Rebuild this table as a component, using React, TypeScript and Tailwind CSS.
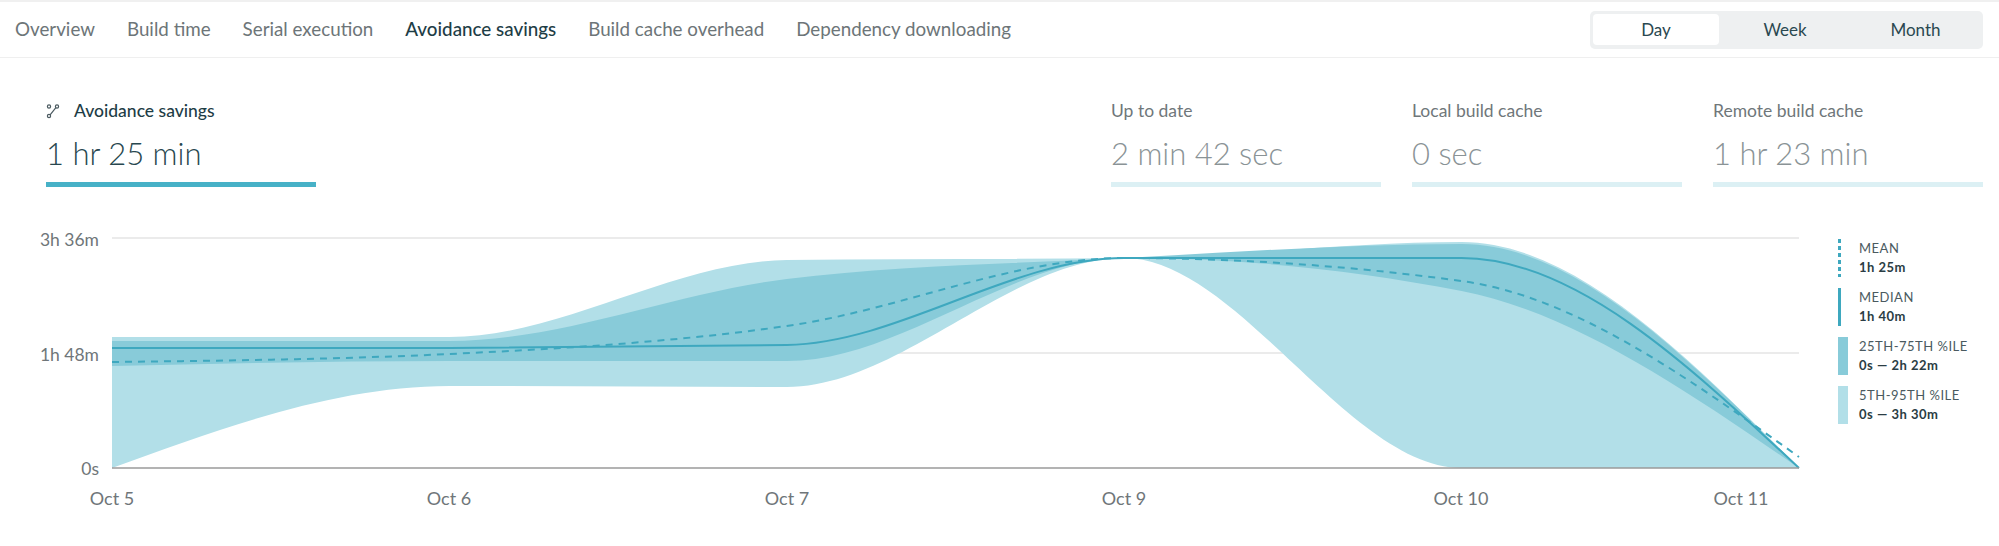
import React from "react";

const OFF = 200;
const XS = [112, 449.4, 786.8, 1124.2, 1461.6, 1799];
const P95 = [338, 338, 261, 259, 243, 469];
const P75 = [342, 342, 280, 259, 245, 469];
const MED = [349, 349, 346, 259, 259, 469];
const MEAN = [363, 355, 327, 259, 282, 458];
const P25 = [367, 362, 362, 259, 292, 469];
const P5 = [469, 387, 388, 259, 469, 469];

function tangents(xs: number[], ys: number[]): number[] {
  const n = xs.length;
  const s: number[] = [];
  for (let i = 0; i < n - 1; i++) s.push((ys[i + 1] - ys[i]) / (xs[i + 1] - xs[i]));
  const t: number[] = new Array(n).fill(0);
  for (let i = 1; i < n - 1; i++) {
    const h0 = xs[i] - xs[i - 1];
    const h1 = xs[i + 1] - xs[i];
    const s0 = s[i - 1];
    const s1 = s[i];
    const p = (s0 * h1 + s1 * h0) / (h0 + h1);
    t[i] = (Math.sign(s0) + Math.sign(s1)) * Math.min(Math.abs(s0), Math.abs(s1), 0.5 * Math.abs(p)) || 0;
  }
  t[0] = (3 * s[0] - t[1]) / 2;
  t[n - 1] = (3 * s[n - 2] - t[n - 2]) / 2;
  return t;
}

function fwd(xs: number[], ysPage: number[]): string {
  const ys = ysPage.map((y) => y - OFF);
  const t = tangents(xs, ys);
  let d = `M${xs[0]},${ys[0]}`;
  for (let i = 0; i < xs.length - 1; i++) {
    const dx = (xs[i + 1] - xs[i]) / 3;
    d += ` C${xs[i] + dx},${ys[i] + dx * t[i]} ${xs[i + 1] - dx},${ys[i + 1] - dx * t[i + 1]} ${xs[i + 1]},${ys[i + 1]}`;
  }
  return d;
}

function back(xs: number[], ysPage: number[]): string {
  const ys = ysPage.map((y) => y - OFF);
  const t = tangents(xs, ys);
  const n = xs.length;
  let d = ` L${xs[n - 1]},${ys[n - 1]}`;
  for (let i = n - 2; i >= 0; i--) {
    const dx = (xs[i + 1] - xs[i]) / 3;
    d += ` C${xs[i + 1] - dx},${ys[i + 1] - dx * t[i + 1]} ${xs[i] + dx},${ys[i] + dx * t[i]} ${xs[i]},${ys[i]}`;
  }
  return d;
}

function area(up: number[], lo: number[]): string {
  return fwd(XS, up) + back(XS, lo) + " Z";
}

const LINE = "#3ea8bf";
const DARK = "#88cbd9";
const LIGHT = "#b2dfe8";

function Chart() {
  const xLabels: [string, number][] = [
    ["Oct 5", 112],
    ["Oct 6", 449],
    ["Oct 7", 787],
    ["Oct 9", 1124],
    ["Oct 10", 1461],
    ["Oct 11", 1741],
  ];
  const yLabels: [string, number][] = [
    ["3h 36m", 240],
    ["1h 48m", 355],
    ["0s", 469],
  ];
  return (
    <svg width="1830" height="346" className="shrink-0 block">
      <line x1="112" x2="1799" y1={239 - OFF} y2={239 - OFF} stroke="#e4e4e4" strokeWidth="1.5" />
      <line x1="112" x2="1799" y1={354 - OFF} y2={354 - OFF} stroke="#e4e4e4" strokeWidth="1.5" />
      <path d={area(P95, P5)} fill={LIGHT} />
      <path d={area(P75, P25)} fill={DARK} />
      <path d={fwd(XS, MED)} fill="none" stroke={LINE} strokeWidth="2" />
      <path d={fwd(XS, MEAN)} fill="none" stroke={LINE} strokeWidth="2" strokeDasharray="7 6" />
      <line x1="112" x2="1799" y1={469 - OFF} y2={469 - OFF} stroke="#9a9a9a" strokeWidth="1.5" />
      {yLabels.map(([l, y]) => (
        <text key={l} x="99" y={y - OFF} textAnchor="end" dominantBaseline="central" fontSize="17.5" fill="#6f7679">
          {l}
        </text>
      ))}
      {xLabels.map(([l, x]) => (
        <text key={l} x={x} y={499 - OFF} textAnchor="middle" dominantBaseline="central" fontSize="18" fill="#6f7679">
          {l}
        </text>
      ))}
    </svg>
  );
}

function LegendItem({ indicator, label, value }: { indicator: React.ReactNode; label: string; value: string }) {
  return (
    <div className="flex h-[38px] gap-[11px]">
      <div className="w-[10px] h-[38px] shrink-0">{indicator}</div>
      <div className="flex flex-col text-[13px] leading-[19px] tracking-[0.5px] whitespace-nowrap">
        <span className="text-[#4a5a60]">{label}</span>
        <span className="text-[#2b3d44] font-bold">{value}</span>
      </div>
    </div>
  );
}

function Legend() {
  return (
    <div className="ml-[8px] mt-[40px] flex flex-col gap-[11px]">
      <LegendItem
        indicator={
          <svg width="10" height="38" className="block">
            <line x1="1.5" x2="1.5" y1="0" y2="38" stroke={LINE} strokeWidth="3" strokeDasharray="4 3" />
          </svg>
        }
        label="MEAN"
        value="1h 25m"
      />
      <LegendItem indicator={<div className="w-[3px] h-full bg-[#3ea8bf]" />} label="MEDIAN" value="1h 40m" />
      <LegendItem indicator={<div className="w-[10px] h-full bg-[#88cbd9]" />} label="25TH-75TH %ILE" value="0s — 2h 22m" />
      <LegendItem indicator={<div className="w-[10px] h-full bg-[#b2dfe8]" />} label="5TH-95TH %ILE" value="0s — 3h 30m" />
    </div>
  );
}

function StatCard({ label, value, main }: { label: string; value: string; main?: boolean }) {
  return (
    <div className="w-[270px] flex flex-col">
      <div className={`flex items-center h-[20px] text-[17.5px] leading-[20px] whitespace-nowrap ${main ? "text-[#1e3d46] font-medium" : "text-[#6f777a]"}`}>
        {main && (
          <svg width="14" height="16" viewBox="0 0 14 16" className="mr-[14px] shrink-0" fill="none" stroke="#4b5a60" strokeWidth="1.2">
            <circle cx="3" cy="3.5" r="1.6" />
            <circle cx="11" cy="3.5" r="1.6" />
            <circle cx="3" cy="13" r="1.6" />
            <line x1="4.1" y1="11.8" x2="9.9" y2="4.7" />
          </svg>
        )}
        {label}
      </div>
      <div className={`mt-[14px] text-[31px] leading-[36px] font-light whitespace-nowrap ${main ? "text-[#28474f]" : "text-[#8a9396]"}`}>{value}</div>
      <div className={`mt-[11px] h-[5px] ${main ? "bg-[#47b1c7]" : "bg-[#dcf0f4]"}`} />
    </div>
  );
}

export default function App() {
  const tabs = ["Overview", "Build time", "Serial execution", "Avoidance savings", "Build cache overhead", "Dependency downloading"];
  return (
    <div className="w-[1999px] h-[546px] bg-white font-['Lato',sans-serif] overflow-hidden">
      <div className="h-[58px] border-t-2 border-b border-t-[#f0f0f0] border-b-[#efefef] flex items-center pl-[15px] pr-[16px]">
        <div className="flex gap-[32px] text-[18.8px] whitespace-nowrap">
          {tabs.map((t) => (
            <span key={t} className={t === "Avoidance savings" ? "text-[#1e3d46] font-medium" : "text-[#6d7578]"}>
              {t}
            </span>
          ))}
        </div>
        <div className="ml-auto flex h-[38px] items-center rounded-[5px] bg-[#eef0f1] px-[3px] text-[17px] text-[#2a4850]">
          <div className="w-[126px] h-[31px] rounded-[4px] bg-white flex items-center justify-center">Day</div>
          <div className="w-[132px] h-[31px] flex items-center justify-center">Week</div>
          <div className="w-[129px] h-[31px] flex items-center justify-center">Month</div>
        </div>
      </div>
      <div className="flex pl-[46px] pr-[16px] pt-[43px]">
        <StatCard label="Avoidance savings" value="1 hr 25 min" main />
        <div className="ml-auto flex gap-[31px]">
          <StatCard label="Up to date" value="2 min 42 sec" />
          <StatCard label="Local build cache" value="0 sec" />
          <StatCard label="Remote build cache" value="1 hr 23 min" />
        </div>
      </div>
      <div className="mt-[12px] flex">
        <Chart />
        <Legend />
      </div>
    </div>
  );
}
